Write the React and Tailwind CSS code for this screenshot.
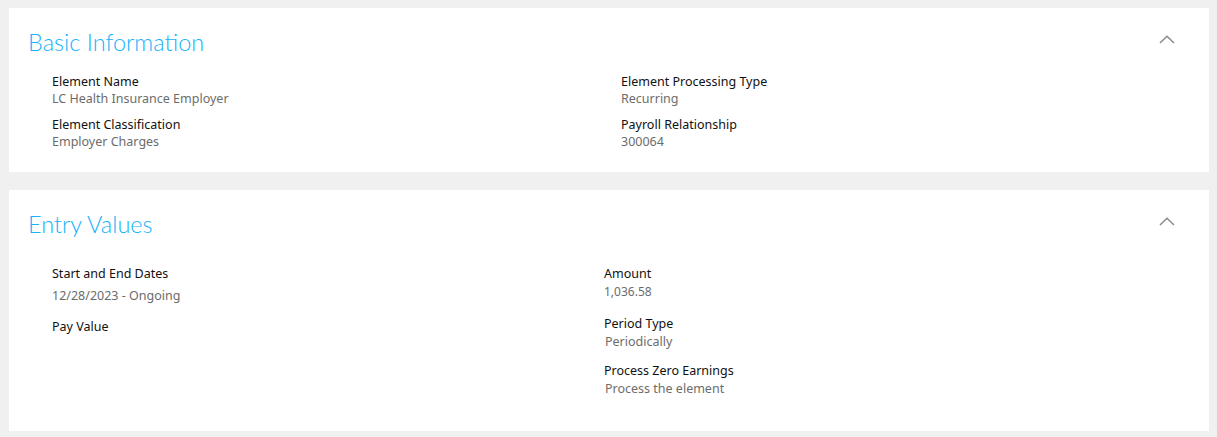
import React from 'react';

const Chevron = () => (
  <svg width="16" height="9" viewBox="0 0 16 9" fill="none" className="shrink-0">
    <path d="M1 8 L8 1.2 L15 8" stroke="#8a8a8a" strokeWidth="1.5" />
  </svg>
);

const Field = ({ label, value, gap = 'mt-0', valueClass = 'text-[12.5px]', className = '' }) => (
  <div className={className}>
    <div className="text-[12.5px] leading-[17px] text-[#111111]">{label}</div>
    {value && <div className={`${gap} ${valueClass} leading-[17px] text-[#6c6c6c]`}>{value}</div>}
  </div>
);

const Header = ({ title }) => (
  <div className="flex justify-between items-start pr-[34px]">
    <h2 className="text-[23.5px] leading-[31px] font-light text-[#17b2fa]" style={{ fontFamily: 'Lato, "Noto Sans", sans-serif' }}>{title}</h2>
    <div className="mt-[8px]"><Chevron /></div>
  </div>
);

export default function App() {
  return (
    <div className="min-h-[437px] bg-[#f0f0f0] pt-[8px] pb-[6px]" style={{ fontFamily: '"Noto Sans", "Open Sans", sans-serif' }}>
      <section className="ml-[9px] w-[1200px] bg-white pl-[19px] pt-[19px] pb-[22px]">
        <Header title="Basic Information" />
        <div className="mt-[15px] ml-[24px] grid grid-cols-[569px_1fr] gap-y-[9px]">
          <Field label="Element Name" value="LC Health Insurance Employer" />
          <Field label="Element Processing Type" value="Recurring" />
          <Field label="Element Classification" value="Employer Charges" />
          <Field label="Payroll Relationship" value="300064" />
        </div>
      </section>

      <section className="mt-[18px] ml-[9px] w-[1200px] bg-white pl-[19px] pt-[19px] pb-[34px]">
        <Header title="Entry Values" />
        <div className="mt-[25px] ml-[24px] flex">
          <div className="w-[552px]">
            <Field label="Start and End Dates" value="12/28/2023 - Ongoing" gap="mt-[5px]" />
            <Field label="Pay Value" className="mt-[14px]" />
          </div>
          <div>
            <Field label="Amount" value="1,036.58" gap="mt-px" valueClass="text-[12px]" />
            <Field label="Period Type" value="Periodically" gap="mt-px" className="mt-[15px]" valueClass="text-[12.5px] pl-px" />
            <Field label="Process Zero Earnings" value="Process the element" gap="mt-px" className="mt-[12px]" valueClass="text-[12.5px] pl-px" />
          </div>
        </div>
      </section>
    </div>
  );
}
